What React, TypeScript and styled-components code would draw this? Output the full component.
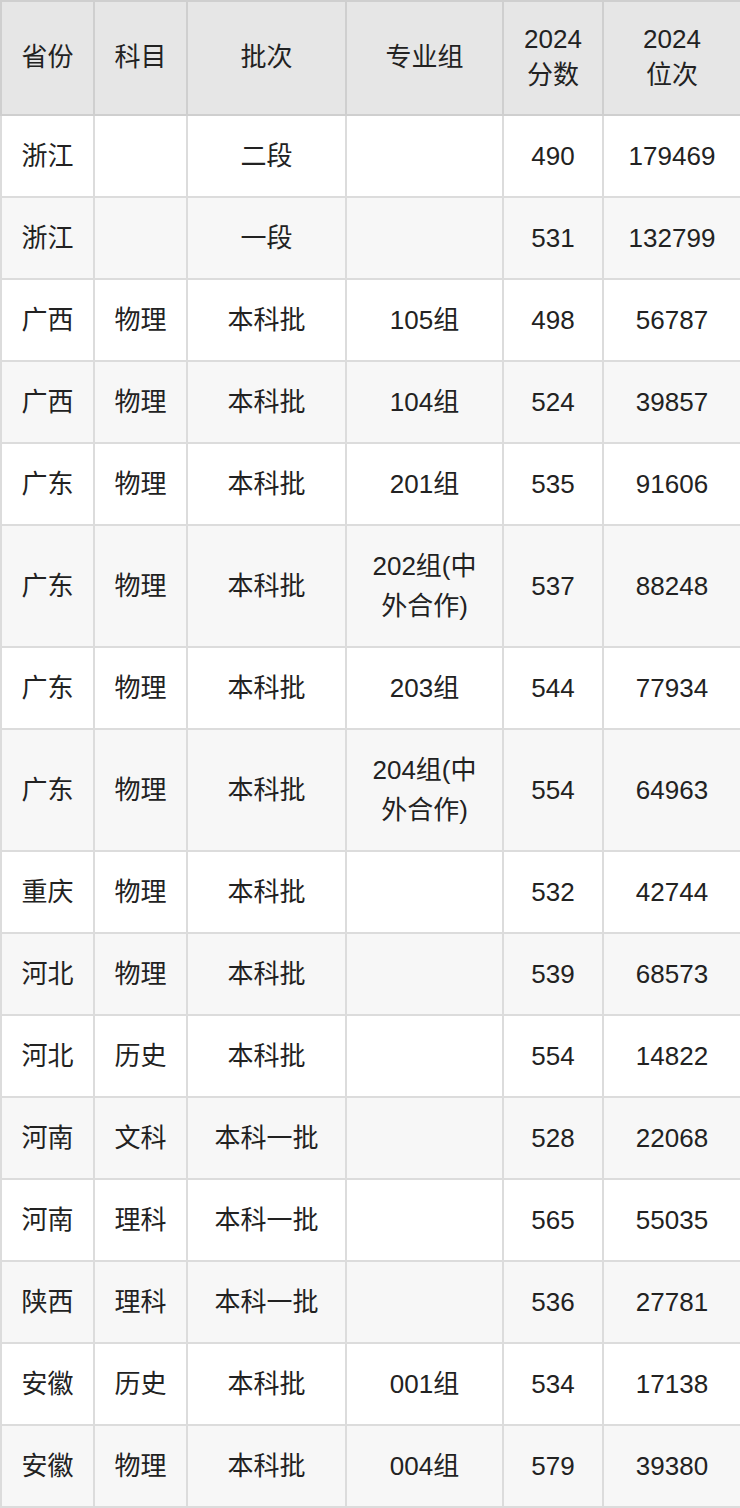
import React from "react";
import styled, { createGlobalStyle } from "styled-components";

const Global = createGlobalStyle`
  html, body { margin: 0; padding: 0; background: #fff; }
  body { font-family: "Liberation Sans", "Noto Sans CJK SC", sans-serif; color: #222; }
`;

const Table = styled.table`
  width: 740px;
  border-collapse: collapse;
  table-layout: fixed;
  font-size: 26px;
`;

const Th = styled.th`
  background: #e6e6e6;
  border: 2px solid #cfcfcf;
  font-weight: normal;
  line-height: 36px;
  height: 109px;
  padding: 0 8px 3px;
  text-align: center;
  vertical-align: middle;
`;

const Tr = styled.tr<{ $alt: boolean }>`
  background: ${(p) => (p.$alt ? "#f7f7f7" : "#fff")};
`;

const Td = styled.td`
  border: 2px solid #dcdcdc;
  line-height: 40px;
  padding: 20px 16px;
  text-align: center;
  vertical-align: middle;
  word-break: break-all;
`;

const widths = [93, 93, 159, 157, 100, 138];

const rows: string[][] = [
  ["浙江", "", "二段", "", "490", "179469"],
  ["浙江", "", "一段", "", "531", "132799"],
  ["广西", "物理", "本科批", "105组", "498", "56787"],
  ["广西", "物理", "本科批", "104组", "524", "39857"],
  ["广东", "物理", "本科批", "201组", "535", "91606"],
  ["广东", "物理", "本科批", "202组(中外合作)", "537", "88248"],
  ["广东", "物理", "本科批", "203组", "544", "77934"],
  ["广东", "物理", "本科批", "204组(中外合作)", "554", "64963"],
  ["重庆", "物理", "本科批", "", "532", "42744"],
  ["河北", "物理", "本科批", "", "539", "68573"],
  ["河北", "历史", "本科批", "", "554", "14822"],
  ["河南", "文科", "本科一批", "", "528", "22068"],
  ["河南", "理科", "本科一批", "", "565", "55035"],
  ["陕西", "理科", "本科一批", "", "536", "27781"],
  ["安徽", "历史", "本科批", "001组", "534", "17138"],
  ["安徽", "物理", "本科批", "004组", "579", "39380"],
];

export default function App() {
  return (
    <>
      <Global />
      <Table>
        <colgroup>
          {widths.map((w, i) => (
            <col key={i} style={{ width: w }} />
          ))}
        </colgroup>
        <thead>
          <tr>
            <Th>省份</Th>
            <Th>科目</Th>
            <Th>批次</Th>
            <Th>专业组</Th>
            <Th>2024<br />分数</Th>
            <Th>2024<br />位次</Th>
          </tr>
        </thead>
        <tbody>
          {rows.map((r, i) => (
            <Tr key={i} $alt={i % 2 === 1}>
              {r.map((c, j) => (
                <Td key={j}>{c}</Td>
              ))}
            </Tr>
          ))}
        </tbody>
      </Table>
    </>
  );
}
